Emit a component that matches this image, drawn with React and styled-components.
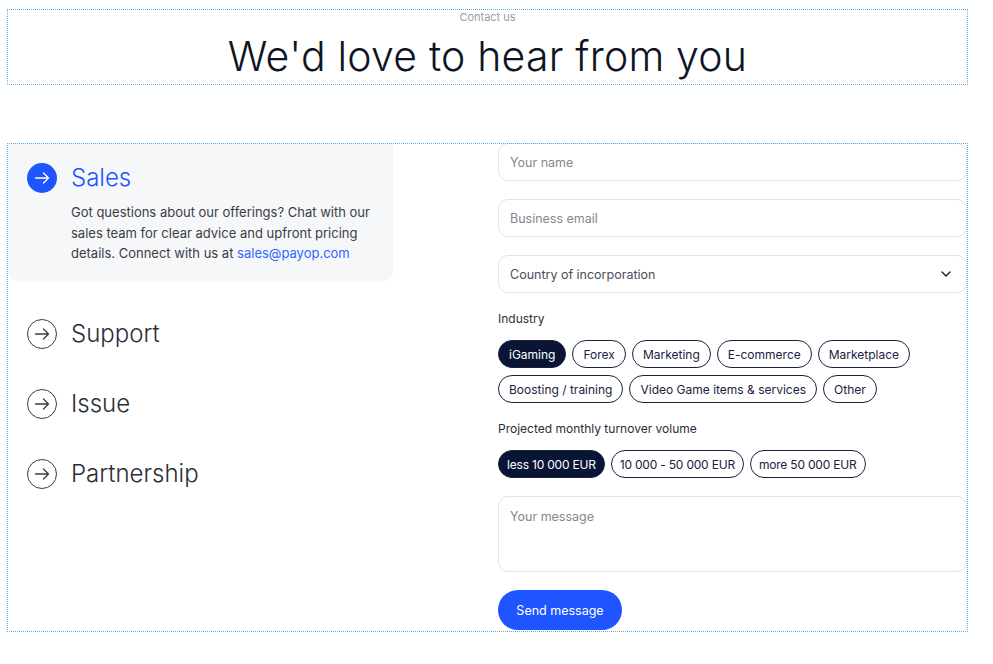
import React, { useState } from 'react';
import styled, { createGlobalStyle } from 'styled-components';

const topics = [
  {
    id: 'sales',
    title: 'Sales',
    text: 'Got questions about our offerings? Chat with our sales team for clear advice and upfront pricing details. Connect with us at ',
    mail: 'sales@payop.com',
  },
  { id: 'support', title: 'Support' },
  { id: 'issue', title: 'Issue' },
  { id: 'partnership', title: 'Partnership' },
];

const industries = [
  'iGaming',
  'Forex',
  'Marketing',
  'E-commerce',
  'Marketplace',
  'Boosting / training',
  'Video Game items & services',
  'Other',
];

const volumes = ['less 10 000 EUR', '10 000 - 50 000 EUR', 'more 50 000 EUR'];

const ArrowIcon = ({ active }) => (
  <svg width="30" height="30" viewBox="0 0 30 30">
    <circle
      cx="15"
      cy="15"
      r={active ? 15 : 14.5}
      fill={active ? '#1f55ff' : 'none'}
      stroke={active ? 'none' : '#3a3d46'}
      strokeWidth="1"
    />
    <path
      d="M8.5 15h13M16.5 10l5 5-5 5"
      fill="none"
      stroke={active ? '#fff' : '#3a3d46'}
      strokeWidth="1.3"
      strokeLinecap="round"
      strokeLinejoin="round"
    />
  </svg>
);

const Chevron = () => (
  <svg width="12" height="12" viewBox="0 0 12 12">
    <path d="M2 4l4 4 4-4" fill="none" stroke="#1b1f2b" strokeWidth="1.4" strokeLinecap="round" strokeLinejoin="round" />
  </svg>
);

const App = () => {
  const [topic, setTopic] = useState('sales');
  const [industry, setIndustry] = useState('iGaming');
  const [volume, setVolume] = useState('less 10 000 EUR');

  return (
    <Page>
      <GlobalStyle />
      <Header>
        <Eyebrow>Contact us</Eyebrow>
        <Title>We'd love to hear from you</Title>
      </Header>
      <Main>
        <Topics>
          {topics.map(t => {
            const active = t.id === topic;
            return (
              <Topic key={t.id} $active={active} onClick={() => setTopic(t.id)}>
                <TopicHead>
                  <ArrowIcon active={active} />
                  <TopicTitle $active={active}>{t.title}</TopicTitle>
                </TopicHead>
                {active && t.text && (
                  <TopicText>
                    {t.text}
                    <Mail href="#">{t.mail}</Mail>
                  </TopicText>
                )}
              </Topic>
            );
          })}
        </Topics>
        <Form onSubmit={e => e.preventDefault()}>
          <Field placeholder="Your name" />
          <Field placeholder="Business email" />
          <Select>
            <span>Country of incorporation</span>
            <Chevron />
          </Select>
          <Group>
            <Label>Industry</Label>
            <Chips>
              {industries.map(item => (
                <Chip
                  type="button"
                  key={item}
                  $selected={item === industry}
                  onClick={() => setIndustry(item)}
                >
                  {item}
                </Chip>
              ))}
            </Chips>
          </Group>
          <Group>
            <Label>Projected monthly turnover volume</Label>
            <Chips>
              {volumes.map(item => (
                <Chip
                  type="button"
                  key={item}
                  $selected={item === volume}
                  $compact
                  onClick={() => setVolume(item)}
                >
                  {item}
                </Chip>
              ))}
            </Chips>
          </Group>
          <Message placeholder="Your message" />
          <SendButton type="submit">Send message</SendButton>
        </Form>
      </Main>
    </Page>
  );
};

export default App;

const GlobalStyle = createGlobalStyle`
  body {
    margin: 0;
    background: #fff;
    font-family: Inter, "Noto Sans", sans-serif;
    color: #1b1f2b;
  }
  * {
    box-sizing: border-box;
  }
`;

const Page = styled.div`
  padding: 9px 0 0 7px;
  width: 968px;
`;

const Header = styled.header`
  padding: 1px;
  outline: 1px dotted #5daeea;
  outline-offset: -1px;
  height: 76px;
  display: flex;
  flex-direction: column;
  align-items: center;
`;

const Eyebrow = styled.div`
  font-size: 11px;
  line-height: 14px;
  color: #9a9ca3;
`;

const Title = styled.h1`
  margin: 8px 0 0;
  font-size: 41px;
  line-height: 48px;
  font-weight: 300;
  color: #0f1424;
  letter-spacing: 0.2px;
`;

const Main = styled.section`
  margin-top: 58px;
  padding: 1px;
  outline: 1px dotted #5daeea;
  outline-offset: -1px;
  height: 489px;
  display: grid;
  grid-template-columns: 385px 1fr;
  column-gap: 105px;
  align-items: start;
`;

const Topics = styled.div`
  display: flex;
  flex-direction: column;
  gap: 40px;
  margin-top: -1px;
`;

const Topic = styled.div`
  padding: ${p => (p.$active ? '20px 20px 18px 19px' : '0 20px 0 19px')};
  background: ${p => (p.$active ? '#f6f7f9' : 'transparent')};
  border-radius: 0 0 12px 12px;
  cursor: pointer;
  &:nth-child(2) {
    margin-top: -3px;
  }
`;

const TopicHead = styled.div`
  display: flex;
  align-items: center;
  gap: 14px;
`;

const TopicTitle = styled.span`
  font-size: 24px;
  line-height: 30px;
  font-weight: 300;
  color: ${p => (p.$active ? '#1f55ff' : '#2b2e37')};
`;

const TopicText = styled.p`
  margin: 9px 0 0 44px;
  font-size: 13px;
  line-height: 20.5px;
  color: #3a3d46;
  max-width: 300px;
`;

const Mail = styled.a`
  color: #2f66ff;
  text-decoration: none;
`;

const Form = styled.form`
  display: flex;
  flex-direction: column;
  align-items: flex-start;
  gap: 18px;
  margin-top: -1px;
`;

const Field = styled.input`
  width: 100%;
  height: 38px;
  border: 1px solid #e2e3e8;
  border-radius: 10px;
  padding: 0 11px;
  font: inherit;
  font-size: 12.5px;
  color: #1b1f2b;
  outline: none;
  &::placeholder {
    color: #85878f;
  }
`;

const Select = styled.div`
  width: 100%;
  height: 38px;
  border: 1px solid #e2e3e8;
  border-radius: 10px;
  padding: 0 14px 0 11px;
  display: flex;
  align-items: center;
  justify-content: space-between;
  font-size: 12.5px;
  color: #4a4d56;
`;

const Group = styled.div`
  display: flex;
  flex-direction: column;
  gap: 13px;
`;

const Label = styled.div`
  font-size: 12px;
  line-height: 16px;
  color: #2b2e37;
`;

const Chips = styled.div`
  display: flex;
  flex-wrap: wrap;
  gap: 7px 6px;
`;

const Chip = styled.button`
  height: 28px;
  padding: 0 ${p => (p.$compact ? '8px' : '10px')};
  border-radius: 14px;
  border: 1px solid #1a2240;
  background: ${p => (p.$selected ? '#0a1536' : '#fff')};
  color: ${p => (p.$selected ? '#fff' : '#1a2240')};
  font: inherit;
  font-size: 12px;
  letter-spacing: ${p => (p.$compact ? '-0.2px' : '0')};
  cursor: pointer;
`;

const Message = styled.textarea`
  width: 100%;
  height: 76px;
  border: 1px solid #e2e3e8;
  border-radius: 10px;
  padding: 12px 11px;
  font: inherit;
  font-size: 12.5px;
  resize: none;
  outline: none;
  &::placeholder {
    color: #85878f;
  }
`;

const SendButton = styled.button`
  width: 124px;
  height: 40px;
  border: none;
  border-radius: 20px;
  background: #1f55ff;
  color: #fff;
  font: inherit;
  font-size: 12.5px;
  cursor: pointer;
`;
